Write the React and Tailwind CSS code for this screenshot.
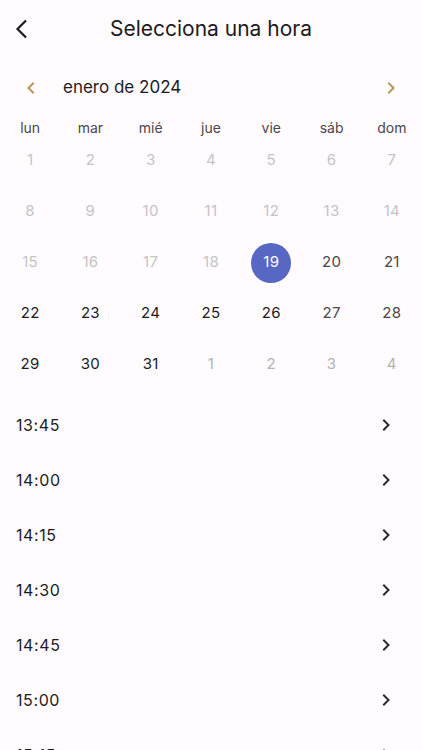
const weekdays = ["lun", "mar", "mié", "jue", "vie", "sáb", "dom"]

// each cell: [label, kind] kind: off | on | wk | sel | next
const days = [
  ...Array.from({ length: 18 }, (_, i) => [String(i + 1), "off"]),
  ["19", "sel"],
  ["20", "wk"],
  ["21", "wk"],
  ["22", "on"],
  ["23", "on"],
  ["24", "on"],
  ["25", "on"],
  ["26", "on"],
  ["27", "wk"],
  ["28", "wk"],
  ["29", "on"],
  ["30", "on"],
  ["31", "on"],
  ["1", "next"],
  ["2", "next"],
  ["3", "next"],
  ["4", "next"],
]

const times = ["13:45", "14:00", "14:15", "14:30", "14:45", "15:00", "15:15"]

function Chevron({ left, className, size = 12, stroke = 2 }) {
  return (
    <svg width={size} height={size} viewBox="0 0 12 12" className={className} fill="none">
      <polyline
        points={left ? "8,1.5 3.5,6 8,10.5" : "4,1.5 8.5,6 4,10.5"}
        stroke="currentColor"
        strokeWidth={stroke}
        strokeLinecap="square"
        strokeLinejoin="miter"
      />
    </svg>
  )
}

function DayCell({ label, kind }) {
  if (kind === "sel") {
    return (
      <div className="h-[51px] flex items-center justify-center">
        <div className="w-10 h-10 rounded-full bg-[#5667c4] text-white flex items-center justify-center text-[15px] tracking-[0.3px]">
          {label}
        </div>
      </div>
    )
  }
  const color =
    kind === "on"
      ? "text-[#1c1b1f]"
      : kind === "wk"
      ? "text-[#4a474d]"
      : kind === "next"
      ? "text-[#b4b1b6]"
      : "text-[#c6c3c8]"
  return (
    <div className={`h-[51px] flex items-center justify-center text-[15px] tracking-[0.3px] ${color}`}>{label}</div>
  )
}

export default function App() {
  return (
    <div
      className="w-[422px] h-[750px] overflow-hidden bg-[#fffbfe] text-[#1c1b1f]"
      style={{ fontFamily: "Inter, Roboto, 'Noto Sans', sans-serif" }}
    >
      {/* header */}
      <div className="h-[58px] flex items-center relative">
        <div className="w-[56px] flex items-center justify-center">
          <svg width="14" height="20" viewBox="0 0 14 20" fill="none" className="text-[#1c1b1f] -ml-[12px]">
            <polyline points="11,1.5 2.5,10 11,18.5" stroke="currentColor" strokeWidth="2.2" />
          </svg>
        </div>
        <div className="flex-1 text-center text-[21px] -ml-[56px]">Selecciona una hora</div>
      </div>

      {/* month nav */}
      <div className="h-[60px] flex items-center px-[25px]">
        <Chevron left className="text-[#b59a55]" size={12} stroke={2} />
        <div className="ml-[26px] text-[17px] text-[#1c1b1f]">enero de 2024</div>
        <div className="flex-1" />
        <Chevron className="text-[#b59a55]" size={12} stroke={2} />
      </div>

      {/* weekdays */}
      <div className="grid grid-cols-7 h-[17px] items-end">
        {weekdays.map((w) => (
          <div key={w} className="text-center text-[14px] leading-[14px] text-[#4a474d]">
            {w}
          </div>
        ))}
      </div>

      {/* days */}
      <div className="grid grid-cols-7">
        {days.map(([label, kind], i) => (
          <DayCell key={i} label={label} kind={kind} />
        ))}
      </div>

      {/* times */}
      <div className="mt-[7px]">
        {times.map((t) => (
          <div key={t} className="h-[55px] flex items-center justify-between pl-4 pr-[30px]">
            <span className="text-[16px] tracking-[0.6px] text-[#1c1b1f]">{t}</span>
            <Chevron className="text-[#2b2930]" size={12} stroke={2} />
          </div>
        ))}
      </div>
    </div>
  )
}
